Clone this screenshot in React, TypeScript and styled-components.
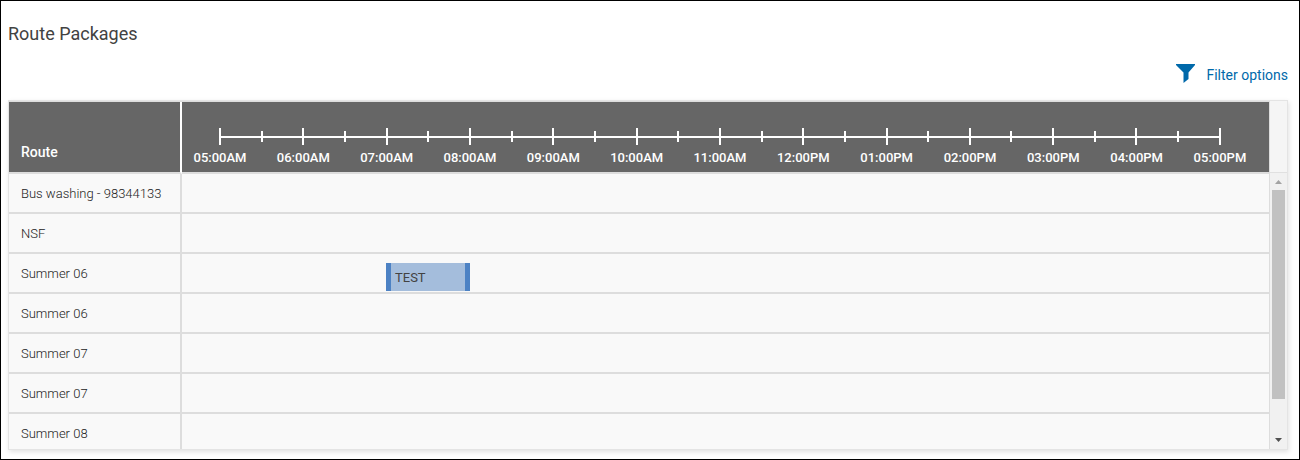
import React from "react";
import styled, { createGlobalStyle } from "styled-components";

const GlobalStyle = createGlobalStyle`
  *, *::before, *::after { box-sizing: border-box; }
  body { margin: 0; font-family: Roboto, "Liberation Sans", sans-serif; color: #424242; background: #fff; }
`;

const Page = styled.main`
  display: flex;
  flex-direction: column;
  height: 100vh;
  padding: 21px 11px 9px 7px;
  border: 1px solid #000;
`;

const Title = styled.h1`
  margin: 0;
  font-size: 18px;
  line-height: 24px;
  font-weight: 400;
`;

const Toolbar = styled.div`
  display: flex;
  justify-content: flex-end;
  padding: 18px 0 14px;
`;

const FilterButton = styled.button`
  display: flex;
  align-items: flex-start;
  gap: 10px;
  padding: 0;
  border: 0;
  background: none;
  color: #0069aa;
  font: 400 14px/22px Roboto, "Liberation Sans", sans-serif;
  cursor: pointer;
`;

const Card = styled.section`
  display: flex;
  flex: 1;
  min-height: 0;
  overflow: hidden;
  border: 1px solid #e4e4e4;
  box-shadow: 1px 2px 5px rgba(0, 0, 0, 0.12);
`;

const Grid = styled.div`
  flex: 1;
  overflow: hidden;
  border-top: 1px solid #ddd;
`;

const Table = styled.table`
  width: 100%;
  table-layout: fixed;
  border-collapse: separate;
  border-spacing: 0;
`;

const HeadCell = styled.th<{ $route?: boolean }>`
  width: ${(p) => (p.$route ? "173px" : "auto")};
  height: 72px;
  padding: ${(p) => (p.$route ? "0 12px 10px" : "0 48px 4px 37px")};
  vertical-align: bottom;
  text-align: left;
  background: #666;
  background-clip: padding-box;
  border-bottom: 2px solid #ddd;
  border-right: ${(p) => (p.$route ? "2px solid #fff" : "0")};
  color: #fff;
  font-size: 14px;
  line-height: 20px;
  font-weight: 500;
`;

const RouteCell = styled.th`
  height: 40px;
  padding: 2px 12px 0;
  text-align: left;
  background: #f9f9f9;
  border-bottom: 2px solid #ddd;
  border-right: 2px solid #ddd;
  font-size: 13px;
  line-height: 20px;
  font-weight: 300;
  color: #222;
`;

const TimeCell = styled.td`
  height: 40px;
  padding: 9px 48px 0 37px;
  vertical-align: top;
  background: #f9f9f9;
  border-bottom: 2px solid #ddd;
`;

const Ticks = styled.div`
  display: flex;
  justify-content: space-between;
  align-items: center;
  height: 17px;
  background: linear-gradient(#fff, #fff) center / 100% 2px no-repeat;
`;

const Tick = styled.span<{ $major: boolean }>`
  width: 2px;
  height: ${(p) => (p.$major ? 17 : 11)}px;
  background: #fff;
`;

const Hours = styled.div`
  display: flex;
  justify-content: space-between;
  padding-top: 3px;
`;

const Hour = styled.span`
  display: flex;
  justify-content: center;
  width: 2px;
  white-space: nowrap;
  font-size: 13px;
`;

const Trip = styled.div`
  height: 28px;
  padding: 0 4px;
  border: solid #4d82c4;
  border-width: 0 5px;
  background: #a4bddc;
  font-size: 13px;
  line-height: 30px;
`;

const Side = styled.div`
  display: flex;
  flex-direction: column;
  width: 18px;
  border-left: 1px solid #ddd;
  background: #f5f5f5;
`;

const SideHead = styled.div`
  height: 72px;
  border-bottom: 1px solid #e0e0e0;
`;

const Track = styled.div`
  display: flex;
  flex: 1;
  flex-direction: column;
  align-items: center;
  background: #f1f1f1;
`;

const Thumb = styled.div`
  flex: 209;
  width: 13px;
  background: #c1c1c1;
`;

const Rest = styled.div`
  flex: 33;
`;

const Arrow = styled.svg`
  flex: none;
  width: 17px;
  height: 17px;
`;

const hours = [
  "05:00AM", "06:00AM", "07:00AM", "08:00AM", "09:00AM", "10:00AM", "11:00AM",
  "12:00PM", "01:00PM", "02:00PM", "03:00PM", "04:00PM", "05:00PM",
];

interface Route {
  name: string;
  trip?: { label: string; start: number; end: number };
}

const routes: Route[] = [
  { name: "Bus washing - 98344133" },
  { name: "NSF" },
  { name: "Summer 06", trip: { label: "TEST", start: 7, end: 8 } },
  { name: "Summer 06" },
  { name: "Summer 07" },
  { name: "Summer 07" },
  { name: "Summer 08" },
];

const percent = (span: number) => `${(span / 12) * 100}%`;

export default function App() {
  return (
    <>
      <GlobalStyle />
      <Page>
        <Title>Route Packages</Title>
        <Toolbar>
          <FilterButton type="button">
            <svg width="20" height="19" viewBox="0 0 20 19" aria-hidden="true">
              <path d="M0 0H19V1L12.500 8.500V15L7.500 19V8.500L0 1Z" fill="#0069aa" />
            </svg>
            Filter options
          </FilterButton>
        </Toolbar>
        <Card>
          <Grid>
            <Table>
              <thead>
                <tr>
                  <HeadCell $route scope="col">Route</HeadCell>
                  <HeadCell scope="col">
                    <Ticks>
                      {Array.from({ length: 25 }, (_, i) => (
                        <Tick key={i} $major={i % 2 === 0} />
                      ))}
                    </Ticks>
                    <Hours>
                      {hours.map((h) => <Hour key={h}>{h}</Hour>)}
                    </Hours>
                  </HeadCell>
                </tr>
              </thead>
              <tbody>
                {routes.map((r, i) => (
                  <tr key={i}>
                    <RouteCell scope="row">{r.name}</RouteCell>
                    <TimeCell>
                      {r.trip && (
                        <Trip
                          style={{
                            marginLeft: percent(r.trip.start - 5),
                            width: percent(r.trip.end - r.trip.start),
                          }}
                        >
                          {r.trip.label}
                        </Trip>
                      )}
                    </TimeCell>
                  </tr>
                ))}
              </tbody>
            </Table>
          </Grid>
          <Side aria-hidden="true">
            <SideHead />
            <Track>
              <Arrow viewBox="0 0 17 17"><path d="M5 11L8.500 7L12 11Z" fill="#a3a3a3" /></Arrow>
              <Thumb />
              <Rest />
              <Arrow viewBox="0 0 17 17"><path d="M5 6L8.500 10L12 6Z" fill="#505050" /></Arrow>
            </Track>
          </Side>
        </Card>
      </Page>
    </>
  );
}
